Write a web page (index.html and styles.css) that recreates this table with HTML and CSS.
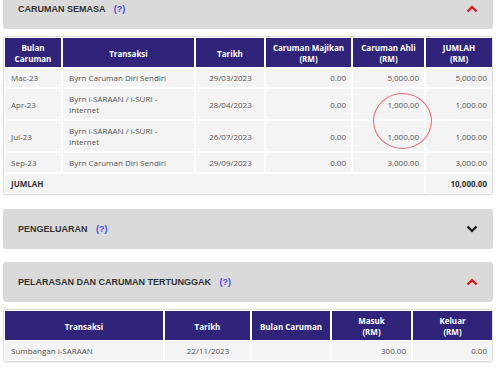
FILE: index.html
```html
<!DOCTYPE html>
<html>
<head>
<meta charset="utf-8">
<link rel="stylesheet" href="styles.css">
</head>
<body>
<div class="page">
  <div class="panel">
    <div class="title">CARUMAN SEMASA <span class="help">(?)</span></div>
    <svg class="chev" width="12" height="8" viewBox="0 0 12 8"><polyline points="1.5,6.5 6,2 10.5,6.5" fill="none" stroke="#e8121a" stroke-width="2.2"/></svg>
  </div>
  <div class="tablebox">
    <table class="t1">
      <colgroup><col style="width:57px"><col style="width:133px"><col style="width:70px"><col style="width:87px"><col style="width:73px"><col style="width:67px"></colgroup>
      <thead>
        <tr><th>Bulan<br>Caruman</th><th>Transaksi</th><th>Tarikh</th><th>Caruman Majikan<br>(RM)</th><th>Caruman Ahli<br>(RM)</th><th>JUMLAH<br>(RM)</th></tr>
      </thead>
      <tbody>
        <tr><td>Mac-23</td><td>Byrn Caruman Diri Sendiri</td><td class="c">29/03/2023</td><td class="r">0.00</td><td class="r">5,000.00</td><td class="r">5,000.00</td></tr>
        <tr><td>Apr-23</td><td>Byrn i-SARAAN / i-SURI -<br>Internet</td><td class="c">28/04/2023</td><td class="r">0.00</td><td class="r">1,000.00</td><td class="r">1,000.00</td></tr>
        <tr><td>Jul-23</td><td>Byrn i-SARAAN / i-SURI -<br>Internet</td><td class="c">26/07/2023</td><td class="r">0.00</td><td class="r">1,000.00</td><td class="r">1,000.00</td></tr>
        <tr><td>Sep-23</td><td>Byrn Caruman Diri Sendiri</td><td class="c">29/09/2023</td><td class="r">0.00</td><td class="r">3,000.00</td><td class="r">3,000.00</td></tr>
        <tr class="total"><td colspan="5">JUMLAH</td><td class="r">10,000.00</td></tr>
      </tbody>
    </table>
  </div>
  <div class="panel gap first">
    <div class="title">PENGELUARAN <span class="help">(?)</span></div>
    <svg class="chev" width="12" height="8" viewBox="0 0 12 8"><polyline points="1.5,1.5 6,6 10.5,1.5" fill="none" stroke="#111" stroke-width="2.2"/></svg>
  </div>
  <div class="panel gap">
    <div class="title">PELARASAN DAN CARUMAN TERTUNGGAK <span class="help">(?)</span></div>
    <svg class="chev" width="12" height="8" viewBox="0 0 12 8"><polyline points="1.5,6.5 6,2 10.5,6.5" fill="none" stroke="#e8121a" stroke-width="2.2"/></svg>
  </div>
  <div class="tablebox">
    <table class="t2">
      <colgroup><col style="width:159px"><col style="width:87px"><col style="width:80px"><col style="width:81px"><col style="width:80px"></colgroup>
      <thead>
        <tr><th>Transaksi</th><th>Tarikh</th><th>Bulan Caruman</th><th>Masuk<br>(RM)</th><th>Keluar<br>(RM)</th></tr>
      </thead>
      <tbody>
        <tr><td>Sumbangan i-SARAAN</td><td class="c">22/11/2023</td><td></td><td class="r">300.00</td><td class="r">0.00</td></tr>
      </tbody>
    </table>
  </div>
</div>
<div class="mark"></div>
</body>
</html>
```
FILE: styles.css
```css
html, body {
  margin: 0;
  padding: 0;
  background: #fff;
  overflow: hidden;
}
body {
  width: 500px;
  height: 367px;
  position: relative;
  font-family: "Open Sans", "Liberation Sans", sans-serif;
}
.page {
  margin-top: -11px;
  padding: 0 7px 0 3px;
}
.panel {
  height: 40px;
  background: #dadada;
  border-radius: 3px;
  display: flex;
  align-items: center;
  justify-content: space-between;
  padding: 0 15px 0 15px;
}
.panel.gap {
  margin-top: 13px;
}
.panel.gap.first {
  margin-top: 14px;
}
.title {
  font-family: "Liberation Sans", Arial, sans-serif;
  font-weight: bold;
  font-size: 9px;
  color: #333;
}
.help {
  color: #4b4be8;
  margin-left: 6px;
}
.chev {
  display: block;
}
.tablebox {
  margin-top: 7px;
  border: 1px solid #dcdcdc;
  border-radius: 3px;
  padding: 1px;
  box-shadow: 0 1px 1px rgba(0,0,0,0.06);
}
table {
  width: 100%;
  border-collapse: collapse;
  table-layout: fixed;
  font-size: 8px;
  line-height: 11px;
}
th {
  background: #2f2479;
  color: #fff;
  font-weight: bold;
  text-align: center;
  padding: 4px 4px 3px;
  height: 22px;
  border-right: 2px solid #fff;
  border-bottom: 1px solid #fff;
}
td {
  background: #f4f4f4;
  color: #555;
  padding: 4px 5px 4px 6px;
  border-right: 2px solid #fff;
  border-bottom: 2px solid #fff;
}
th:last-child, td:last-child {
  border-right: none;
}
tr:last-child td {
  border-bottom: none;
}
td.r { text-align: right; }
td.c { text-align: center; }
.total td {
  font-weight: bold;
  color: #333;
}
.mark {
  position: absolute;
  left: 373px;
  top: 93px;
  width: 57px;
  height: 54px;
  border: 1px solid #ec6a72;
  border-radius: 50%;
}
```
